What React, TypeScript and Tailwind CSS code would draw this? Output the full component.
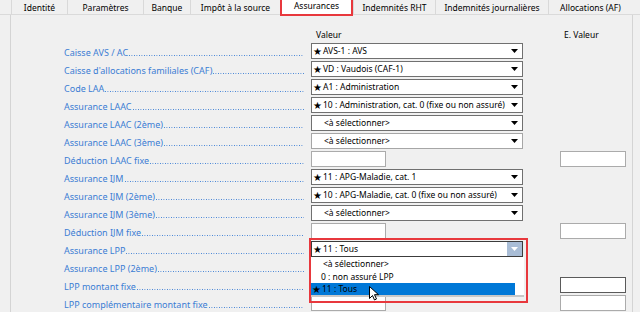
import React from 'react';

type Row = {
  label: string;
  kind: 'sel' | 'txt';
  star?: boolean;
  value?: string;
  light?: boolean;
  ext?: boolean;
  extDark?: boolean;
  open?: boolean;
};

const rows: Row[] = [
  { label: 'Caisse AVS / AC', kind: 'sel', star: true, value: 'AVS-1 : AVS' },
  { label: "Caisse d'allocations familiales (CAF)", kind: 'sel', star: true, value: 'VD : Vaudois (CAF-1)' },
  { label: 'Code LAA', kind: 'sel', star: true, value: 'A1 : Administration' },
  { label: 'Assurance LAAC', kind: 'sel', star: true, value: '10 : Administration, cat. 0 (fixe ou non assuré)' },
  { label: 'Assurance LAAC (2ème)', kind: 'sel', value: '<à sélectionner>' },
  { label: 'Assurance LAAC (3ème)', kind: 'sel', value: '<à sélectionner>', light: true },
  { label: 'Déduction LAAC fixe', kind: 'txt', ext: true },
  { label: 'Assurance IJM', kind: 'sel', star: true, value: '11 : APG-Maladie, cat. 1' },
  { label: 'Assurance IJM (2ème)', kind: 'sel', star: true, value: '10 : APG-Maladie, cat. 0 (fixe ou non assuré)' },
  { label: 'Assurance IJM (3ème)', kind: 'sel', value: '<à sélectionner>' },
  { label: 'Déduction IJM fixe', kind: 'txt', ext: true },
  { label: 'Assurance LPP', kind: 'sel', star: true, value: '11 : Tous', open: true },
  { label: 'Assurance LPP (2ème)', kind: 'sel', value: '<à sélectionner>' },
  { label: 'LPP montant fixe', kind: 'txt', ext: true, extDark: true },
  { label: 'LPP complémentaire montant fixe', kind: 'txt', ext: true },
];

const tabs: { t: string; w: number; active?: boolean }[] = [
  { t: 'Identité', w: 56 },
  { t: 'Paramètres', w: 76 },
  { t: 'Banque', w: 47 },
  { t: 'Impôt à la source', w: 90 },
  { t: 'Assurances', w: 73, active: true },
  { t: 'Indemnités RHT', w: 82 },
  { t: 'Indemnités journalières', w: 113 },
  { t: 'Allocations (AF)', w: 84 },
];

function Arrow({ white }: { white?: boolean }) {
  return (
    <svg width="7" height="4" viewBox="0 0 7 4">
      <path d="M0 0h7L3.5 4z" fill={white ? '#ffffff' : '#000000'} />
    </svg>
  );
}

function Star() {
  return <span className="w-[11px] shrink-0 pl-[1px] text-[10px] leading-[14px]">★</span>;
}

function Select({ row }: { row: Row }) {
  return (
    <div
      className={`relative flex h-[16px] w-[212px] items-center bg-white border text-[8.5px] leading-[14px] ${
        row.open ? 'border-[#3c3c3c]' : row.light ? 'border-[#a6a6a6]' : 'border-[#707070]'
      }`}
    >
      {row.star ? <Star /> : <span className="w-[12px] shrink-0" />}
      <span className="flex-1 whitespace-nowrap">{row.value}</span>
      {row.open ? (
        <span className="flex h-[14px] w-[15px] shrink-0 items-center justify-center bg-[#a9bdd6]">
          <Arrow white />
        </span>
      ) : (
        <span className="flex w-[15px] shrink-0 items-center justify-center">
          <Arrow />
        </span>
      )}
      {row.open && (
        <div className="absolute left-[-1px] top-[15px] z-10 w-[213px] bg-white border-b-2 border-[#c8c8c8]">
          <div className="h-[13px] pl-[12px] leading-[13px]">&lt;à sélectionner&gt;</div>
          <div className="h-[13px] pl-[10px] leading-[13px]">0 : non assuré LPP</div>
          <div className="flex h-[12px] w-[204px] items-center bg-[#0078d7] leading-[12px] text-black">
            <Star />
            <span>11 : Tous</span>
          </div>
        </div>
      )}
    </div>
  );
}

function TextBox({ dark }: { dark?: boolean }) {
  return (
    <div
      className={`h-[16px] bg-white border ${dark ? 'border-[#5a5a5a]' : 'border-[#ababab]'}`}
    />
  );
}

export default function App() {
  return (
    <div
      className="relative h-[312px] w-[640px] overflow-hidden bg-[#f0f0f0] text-[9px] text-black"
      style={{ fontFamily: '"Noto Sans", "Open Sans", sans-serif' }}
    >
      {/* onglets */}
      <div className="flex h-[15px] border-b border-[#dadada] pl-[11px] text-[8.5px]">
        {tabs.map((tab) => (
          <div
            key={tab.t}
            style={{ width: tab.w }}
            className={
              tab.active
                ? 'relative z-10 flex h-[16px] items-start justify-center whitespace-nowrap bg-white border-2 border-t-0 border-[#e8383d] leading-[11px]'
                : 'flex h-[15px] items-center justify-center whitespace-nowrap border-l border-[#d9d9d9] leading-[13px]'
            }
          >
            {tab.t}
          </div>
        ))}
      </div>

      <div className="flex h-[297px]">
        <div className="w-[11px] border-r border-[#d4d4d4]" />
        <div className="w-[621px] pt-[12px]">
          <div className="flex h-[15px] items-center text-[8.5px] leading-[13px]">
            <div className="w-[305px]" />
            <div className="w-[212px]">Valeur</div>
            <div className="w-[36px]" />
            <div>E. Valeur</div>
          </div>
          {rows.map((row) => (
            <div key={row.label} className="flex h-[18px] items-center">
              <div className="ml-[53px] mt-[3px] flex h-[13px] w-[240px] items-end text-[#3b7dd4]">
                <span className="whitespace-nowrap leading-[13px]">{row.label}</span>
                <span className="mb-[3px] ml-[1px] h-[1px] flex-1 bg-[linear-gradient(to_right,#3b7dd4_1px,transparent_1px)] bg-[length:2.5px_1px]" />
              </div>
              <div className="ml-[7px] w-[212px]">
                {row.kind === 'sel' ? (
                  <Select row={row} />
                ) : (
                  <div className="w-[75px]">
                    <TextBox />
                  </div>
                )}
              </div>
              <div className="ml-[37px] w-[66px]">
                {row.ext && <TextBox dark={row.extDark} />}
              </div>
            </div>
          ))}
        </div>
        <div className="w-[8px] border-l border-[#d4d4d4]" />
      </div>

      {/* cadre rouge autour de la liste */}
      <div className="absolute left-[309px] top-[238px] z-20 h-[65px] w-[219px] border-2 border-[#e8383d]" />

      {/* curseur */}
      <svg
        className="absolute left-[369px] top-[286px] z-30"
        width="10"
        height="15"
        viewBox="0 0 10 15"
      >
        <path
          d="M0.5 0.5v12l3-3 2 4.5 2-1-2-4.3h4z"
          fill="#ffffff"
          stroke="#000000"
          strokeWidth="1"
          strokeLinejoin="round"
        />
      </svg>
    </div>
  );
}
